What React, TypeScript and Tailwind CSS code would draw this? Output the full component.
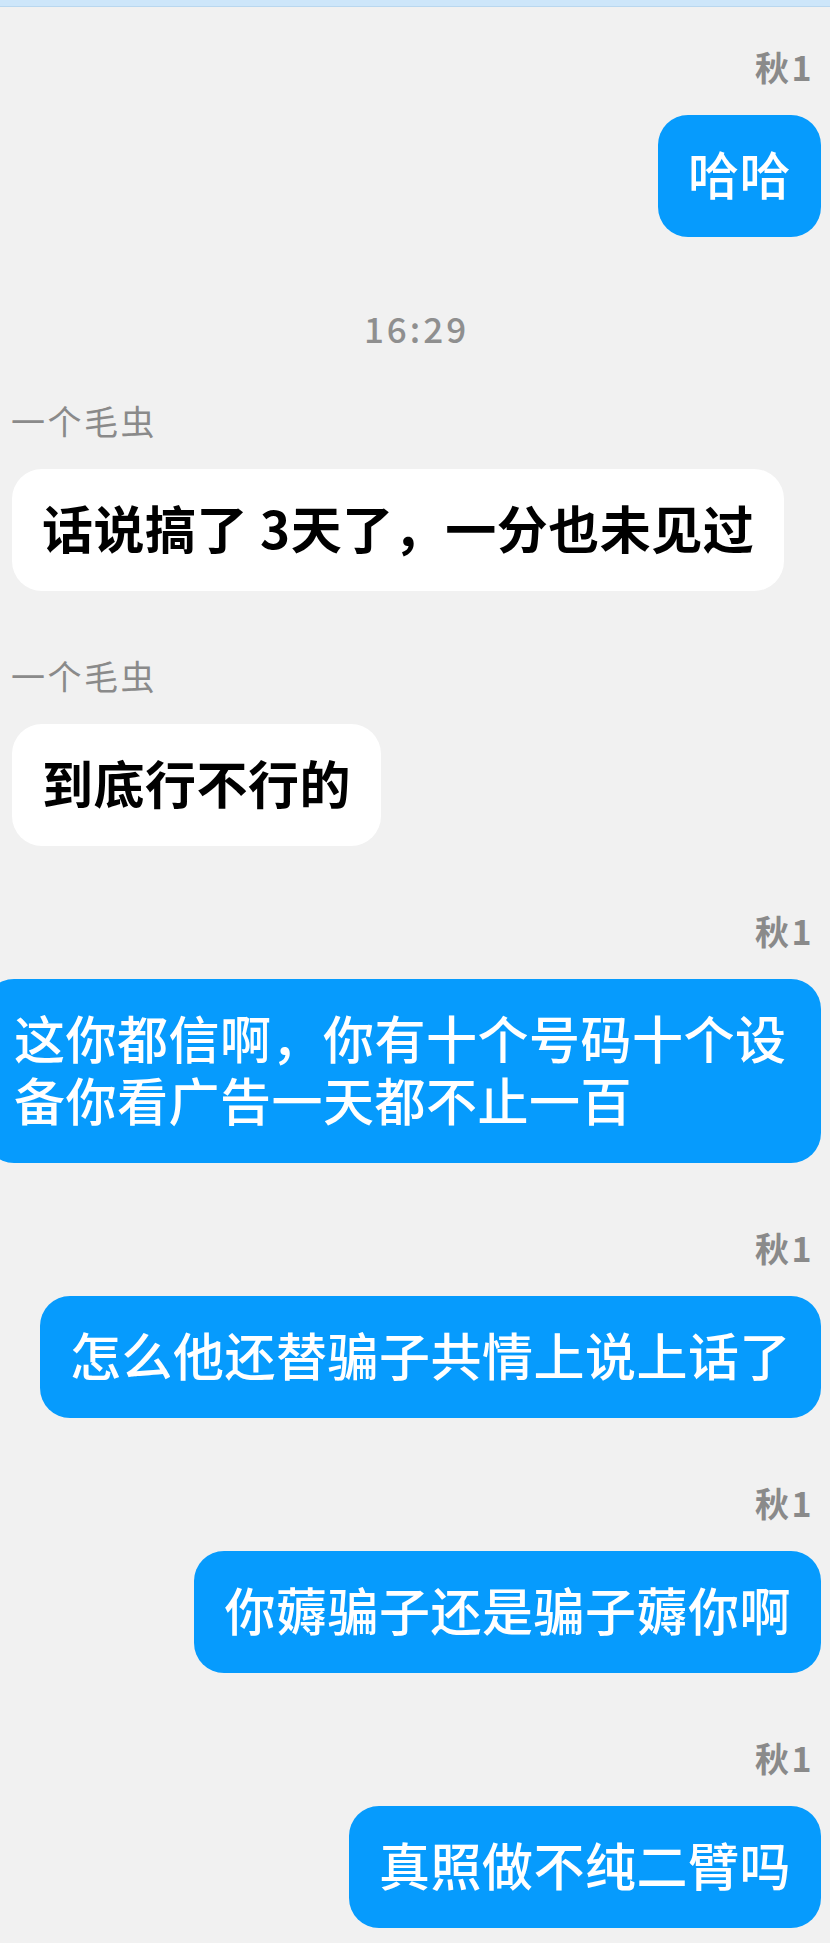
import React from 'react';

type Item =
  | { kind: 'time'; text: string; gap: string }
  | { kind: 'msg'; side: 'left' | 'right'; name: string; text: string; gap: string };

const items: Item[] = [
  { kind: 'msg', side: 'right', name: '秋1', text: '哈哈', gap: 'mt-[40px]' },
  { kind: 'time', text: '16:29', gap: 'mt-[71px]' },
  { kind: 'msg', side: 'left', name: '一个毛虫', text: '话说搞了 3天了，一分也未见过', gap: 'mt-[53px]' },
  { kind: 'msg', side: 'left', name: '一个毛虫', text: '到底行不行的', gap: 'mt-[65px]' },
  {
    kind: 'msg',
    side: 'right',
    name: '秋1',
    text: '这你都信啊，你有十个号码十个设备你看广告一天都不止一百',
    gap: 'mt-[65px]',
  },
  { kind: 'msg', side: 'right', name: '秋1', text: '怎么他还替骗子共情上说上话了', gap: 'mt-[65px]' },
  { kind: 'msg', side: 'right', name: '秋1', text: '你薅骗子还是骗子薅你啊', gap: 'mt-[65px]' },
  { kind: 'msg', side: 'right', name: '秋1', text: '真照做不纯二臂吗', gap: 'mt-[65px]' },
];

const Bubble: React.FC<{ side: 'left' | 'right'; text: string }> = ({ side, text }) => {
  const mine = side === 'right';
  return (
    <div
      className={`shrink-0 max-w-[837px] rounded-[30px] px-[30px] pt-[27px] pb-[33px] text-[51px] leading-[62px] tracking-[0.5px] ${
        mine ? 'bg-[#069bfd] text-white font-medium' : 'bg-white text-black font-bold'
      }`}
    >
      {text}
    </div>
  );
};

export default function App() {
  return (
    <div
      className="min-h-[1943px] w-full overflow-hidden bg-[#f1f1f1] pb-10"
      style={{ fontFamily: '"Noto Sans CJK SC", "Noto Sans", sans-serif' }}
    >
      {/* header edge */}
      <div className="h-[7px] border-b border-[#b9d7ef] bg-[#cde6fa]" />

      <div className="flex flex-col pl-[12px] pr-[9px]">
        {items.map((it, i) => {
          if (it.kind === 'time') {
            return (
              <div
                key={i}
                className={`${it.gap} text-center text-[35px] leading-[40px] tracking-[3px] font-medium text-[#8f8f8f]`}
              >
                {it.text}
              </div>
            );
          }
          const mine = it.side === 'right';
          return (
            <div key={i} className={`${it.gap} flex flex-col ${mine ? 'items-end' : 'items-start'}`}>
              <div
                className={`text-[34px] leading-[40px] tracking-[2.5px] text-[#8a8a8a] ${
                  mine ? 'mr-[7px] font-semibold' : '-ml-[1px] font-normal'
                }`}
              >
                {it.name}
              </div>
              <div className={`mt-[28px] flex w-full ${mine ? 'justify-end' : 'justify-start'}`}>
                <Bubble side={it.side} text={it.text} />
              </div>
            </div>
          );
        })}
      </div>
    </div>
  );
}
